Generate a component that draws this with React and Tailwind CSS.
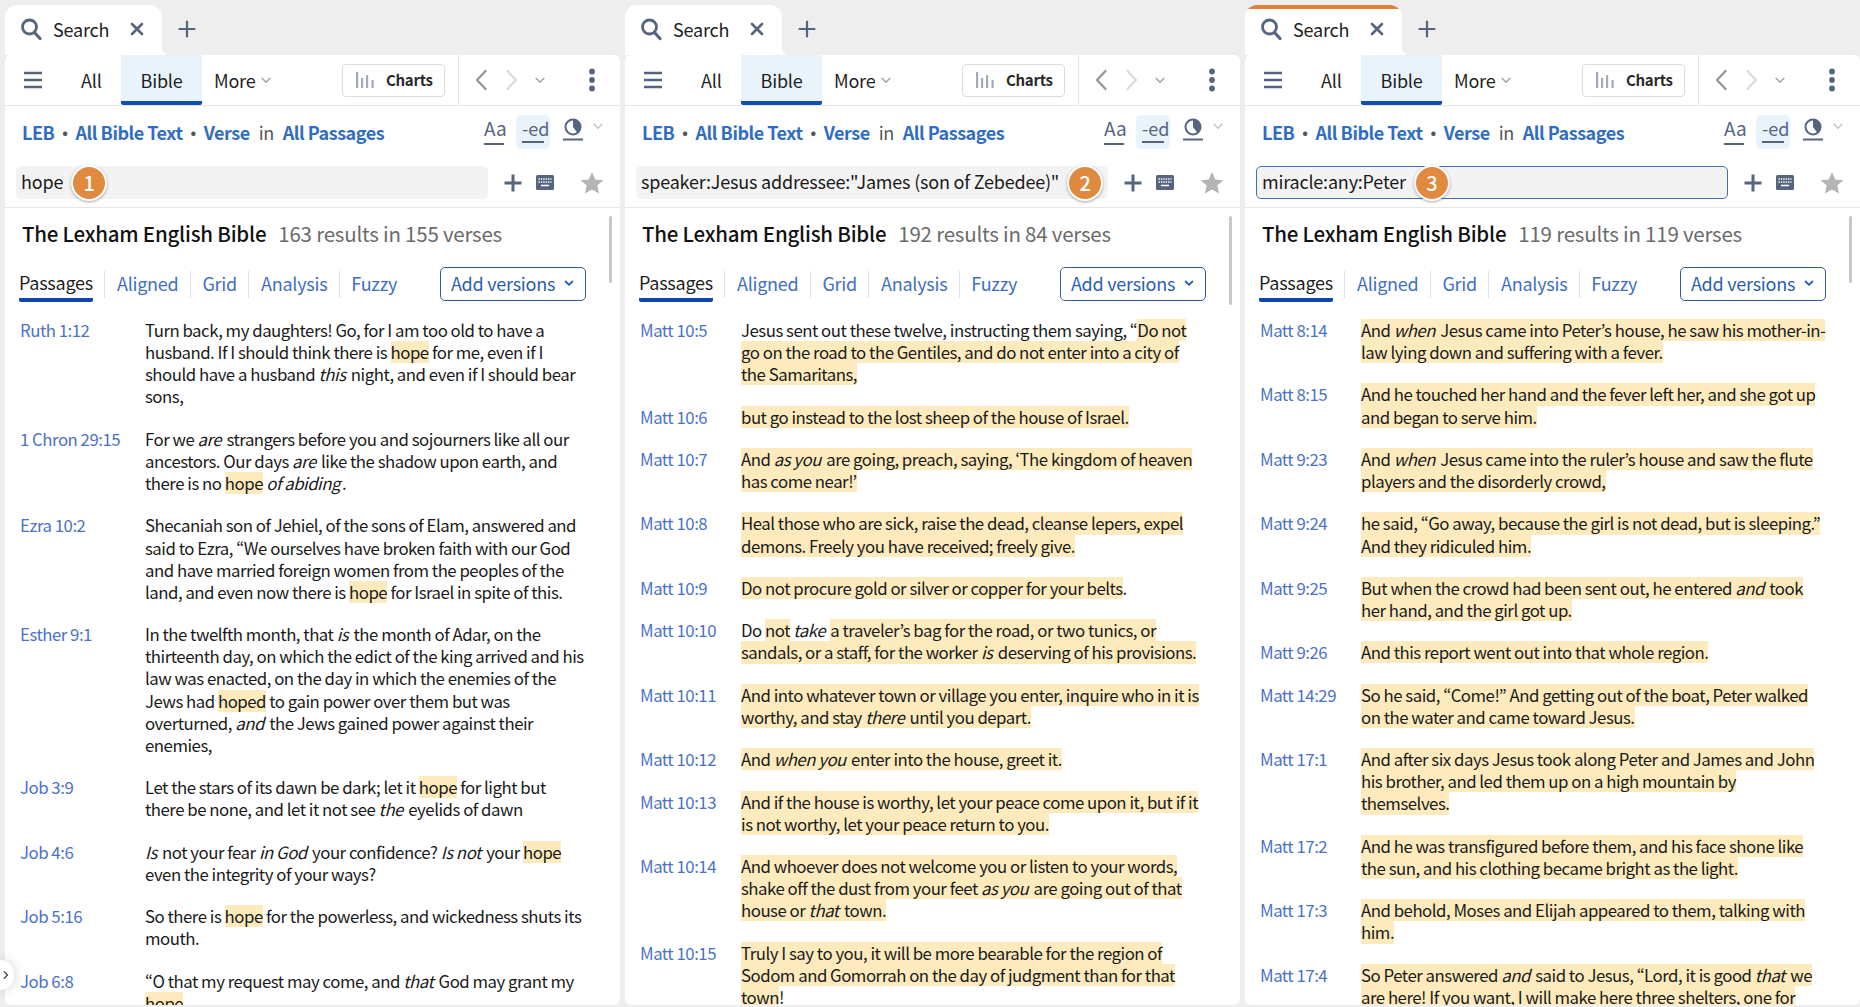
import React from "react";

const slate = "#55657f";

const panel1 = [
  ["Ruth 1:12", ["Turn back, my daughters! Go, for I am too old to have a", "husband. If I should think there is {hope} for me, even if I", "should have a husband _this_ night, and even if I should bear", "sons,"]],
  ["1 Chron 29:15", ["For we _are_ strangers before you and sojourners like all our", "ancestors. Our days _are_ like the shadow upon earth, and", "there is no {hope} _of abiding_."]],
  ["Ezra 10:2", ["Shecaniah son of Jehiel, of the sons of Elam, answered and", "said to Ezra, “We ourselves have broken faith with our God", "and have married foreign women from the peoples of the", "land, and even now there is {hope} for Israel in spite of this."]],
  ["Esther 9:1", ["In the twelfth month, that _is_ the month of Adar, on the", "thirteenth day, on which the edict of the king arrived and his", "law was enacted, on the day in which the enemies of the", "Jews had {hoped} to gain power over them but was", "overturned, _and_ the Jews gained power against their", "enemies,"]],
  ["Job 3:9", ["Let the stars of its dawn be dark; let it {hope} for light but", "there be none, and let it not see _the_ eyelids of dawn"]],
  ["Job 4:6", ["_Is_ not your fear _in God_ your confidence? _Is not_ your {hope}", "even the integrity of your ways?"]],
  ["Job 5:16", ["So there is {hope} for the powerless, and wickedness shuts its", "mouth."]],
  ["Job 6:8", ["“O that my request may come, and _that_ God may grant my", "{hope}"]],
];

const panel2 = [
  ["Matt 10:5", ["Jesus sent out these twelve, instructing them saying, “{Do not}", "{go on the road to the Gentiles, and do not enter into a city of}", "{the Samaritans,}"]],
  ["Matt 10:6", ["{but go instead to the lost sheep of the house of Israel.}"]],
  ["Matt 10:7", ["{And _as you_ are going, preach, saying, ‘The kingdom of heaven}", "{has come near!’}"]],
  ["Matt 10:8", ["{Heal those who are sick, raise the dead, cleanse lepers, expel}", "{demons. Freely you have received; freely give.}"]],
  ["Matt 10:9", ["{Do not procure gold or silver or copper for your belts}."]],
  ["Matt 10:10", ["Do {not} _take_ {a traveler’s bag for the road, or two tunics, or}", "{sandals, or a staff, for the worker _is_ deserving of his provisions.}"]],
  ["Matt 10:11", ["{And into whatever town or village you enter, inquire who in it is}", "{worthy, and stay _there_ until you depart.}"]],
  ["Matt 10:12", ["{And _when you_ enter into the house, greet it.}"]],
  ["Matt 10:13", ["{And if the house is worthy, let your peace come upon it, but if it}", "{is not worthy, let your peace return to you.}"]],
  ["Matt 10:14", ["{And whoever does not welcome you or listen to your words,}", "{shake off the dust from your feet _as you_ are going out of that}", "{house or _that_ town.}"]],
  ["Matt 10:15", ["{Truly I say to you, it will be more bearable for the region of}", "{Sodom and Gomorrah on the day of judgment than for that}", "{town}!"]],
];

const panel3 = [
  ["Matt 8:14", ["{And _when_ Jesus came into Peter’s house, he saw his mother-in-}", "{law lying down and suffering with a fever.}"]],
  ["Matt 8:15", ["{And he touched her hand and the fever left her, and she got up}", "{and began to serve him.}"]],
  ["Matt 9:23", ["{And _when_ Jesus came into the ruler’s house and saw the flute}", "{players and the disorderly crowd,}"]],
  ["Matt 9:24", ["{he said, “Go away, because the girl is not dead, but is sleeping.”}", "{And they ridiculed him.}"]],
  ["Matt 9:25", ["{But when the crowd had been sent out, he entered _and_ took}", "{her hand, and the girl got up.}"]],
  ["Matt 9:26", ["{And this report went out into that whole region.}"]],
  ["Matt 14:29", ["{So he said, “Come!” And getting out of the boat, Peter walked}", "{on the water and came toward Jesus.}"]],
  ["Matt 17:1", ["{And after six days Jesus took along Peter and James and John}", "{his brother, and led them up on a high mountain by}", "{themselves.}"]],
  ["Matt 17:2", ["{And he was transfigured before them, and his face shone like}", "{the sun, and his clothing became bright as the light.}"]],
  ["Matt 17:3", ["{And behold, Moses and Elijah appeared to them, talking with}", "{him.}"]],
  ["Matt 17:4", ["{So Peter answered _and_ said to Jesus, “Lord, it is good _that_ we}", "{are here! If you want, I will make here three shelters, one for}"]],
];

function Italics({ text }) {
  return text.split(/(_[^_]*_)/).map((part, i) =>
    part.startsWith("_") ? <em key={i} className="pr-[2px]">{part.slice(1, -1)}</em> : <span key={i}>{part}</span>
  );
}

function Line({ text }) {
  return (
    <div className="whitespace-pre h-[22.15px]">
      {text.split(/(\{[^}]*\})/).map((part, i) =>
        part.startsWith("{") ? (
          <span key={i} className="inline-block bg-[#fdebbd] h-[22.15px]">
            <Italics text={part.slice(1, -1)} />
          </span>
        ) : (
          <Italics key={i} text={part} />
        )
      )}
    </div>
  );
}

function Chevron({ d, color, width = 2, size = 16 }) {
  return (
    <svg width={size} height={size} viewBox="0 0 16 16" fill="none" className="shrink-0">
      <path d={d} stroke={color} strokeWidth={width} strokeLinecap="round" strokeLinejoin="round" />
    </svg>
  );
}

const down = "M3.5 6l4.5 4.5L12.5 6";

function TabBar({ accent }) {
  return (
    <div className="h-[55px] shrink-0 pt-[5px] flex items-end relative">
      <div className="w-[157px] h-[50px] bg-white rounded-t-[12px] flex items-center relative overflow-hidden">
        {accent && <div className="absolute top-0 left-[3px] right-[3px] h-[4px] bg-[#e3803a] rounded-t-[6px]"></div>}
        <svg width="22" height="24" viewBox="0 0 22 24" fill="none" className="ml-[15px] -mt-[2px]">
          <circle cx="9.5" cy="10" r="7" stroke={slate} strokeWidth="2.8" />
          <path d="M14.5 15.5l5.5 6" stroke={slate} strokeWidth="3.2" strokeLinecap="round" />
        </svg>
        <span className="ml-[11px] text-[18px] leading-none text-[#222] -mt-[3px] tracking-[-0.2px]">Search</span>
        <svg width="14" height="14" viewBox="0 0 14 14" fill="none" className="ml-[21px] -mt-[2px]">
          <path d="M2 2l10 10M12 2L2 12" stroke={slate} strokeWidth="2.6" strokeLinecap="round" />
        </svg>
      </div>
      <div className="absolute left-[157px] top-[47px] w-[8px] h-[8px] bg-[radial-gradient(circle_at_100%_0,transparent_8px,white_8.5px)]"></div>
      <svg width="18" height="18" viewBox="0 0 18 18" fill="none" className="ml-[16px] mb-[17px]">
        <path d="M9 1.5v15M1.5 9h15" stroke={slate} strokeWidth="2.2" strokeLinecap="round" />
      </svg>
    </div>
  );
}

function Toolbar() {
  return (
    <div className="h-[51px] shrink-0 flex items-center border-b border-[#e6e6e6]">
      <svg width="20" height="18" viewBox="0 0 20 18" fill="none" className="ml-[18px]">
        <path d="M1 2h18M1 9h18M1 16h18" stroke={slate} strokeWidth="2.4" />
      </svg>
      <span className="w-[21px] ml-[38px] text-[18px] text-[#1f1f1f] tracking-[-0.2px]">All</span>
      <div className="ml-[19px] w-[81px] self-stretch bg-[#e8f3fc] border-b-[4px] border-[#0e4fb0] rounded-b-[2px] flex items-center justify-center pt-[4px] text-[18px] text-[#1f1f1f] tracking-[-0.2px]">
        Bible
      </div>
      <div className="w-[140px] pl-[12px] flex items-center gap-[4px] text-[18px] text-[#1f1f1f] tracking-[-0.2px]">
        More
        <Chevron d={down} color="#9aa0aa" width={1.5} size={14} />
      </div>
      <div className="w-[103px] h-[33px] border border-[#dcdcdc] rounded-[4px] flex items-center pl-[13px] gap-[11px]">
        <svg width="19" height="18" viewBox="0 0 19 18" fill="#a3abb8">
          <rect x="0" y="1" width="2.2" height="16" />
          <rect x="5" y="7" width="2.2" height="10" />
          <rect x="10" y="4" width="2.2" height="13" />
          <rect x="15.5" y="9" width="2.2" height="8" />
        </svg>
        <span className="text-[15px] font-semibold text-[#2a2a2a] tracking-[-0.3px]">Charts</span>
      </div>
      <div className="ml-[13px] w-px self-stretch bg-[#e6e6e6]"></div>
      <svg width="14" height="22" viewBox="0 0 14 22" fill="none" className="ml-[15px]">
        <path d="M11.5 2L3 11l8.5 9" stroke="#8f949c" strokeWidth="2.2" strokeLinecap="round" strokeLinejoin="round" />
      </svg>
      <svg width="14" height="22" viewBox="0 0 14 22" fill="none" className="ml-[17px]">
        <path d="M2.5 2L11 11l-8.5 9" stroke="#dadada" strokeWidth="2.2" strokeLinecap="round" strokeLinejoin="round" />
      </svg>
      <div className="ml-[14px]">
        <Chevron d={down} color="#a0a4ab" width={1.7} size={14} />
      </div>
      <svg width="8" height="24" viewBox="0 0 8 24" className="ml-[41px]" fill={slate}>
        <circle cx="4" cy="3.5" r="2.9" />
        <circle cx="4" cy="12" r="2.9" />
        <circle cx="4" cy="20.5" r="2.9" />
      </svg>
    </div>
  );
}

function FilterRow({ query, badge, focused }) {
  return (
    <div className="h-[102px] shrink-0 border-b border-[#e6e6e6]">
      <div className="h-[54px] flex items-center pl-[17px] text-[18px] font-semibold text-[#2f6dc4] relative tracking-[-0.47px]">
        <span className="-mt-[2px]">LEB</span>
        <span className="mx-[8px] text-[#555] text-[15px] -mt-[2px]">•</span>
        <span className="-mt-[2px]">All Bible Text</span>
        <span className="mx-[8px] text-[#555] text-[15px] -mt-[2px]">•</span>
        <span className="-mt-[2px]">Verse</span>
        <span className="mx-[9px] font-normal text-[#555] -mt-[2px]">in</span>
        <span className="-mt-[2px]">All Passages</span>
        <div className="absolute left-[479px] top-[9px] w-[20px] text-center text-[#56657e] text-[19px] tracking-normal font-normal leading-[28px] h-[31px] border-b-[2px] border-[#56657e] -mt-px whitespace-nowrap">Aa</div>
        <div className="absolute left-[511px] top-[9px] w-[34px] h-[34px] bg-[#e8f3fc] rounded-[5px] flex justify-center">
          <div className="w-[22px] text-center text-[#56657e] text-[18px] tracking-normal font-normal leading-[24px] h-[27px] border-b-[2px] border-[#56657e] mt-[1px] whitespace-nowrap">-ed</div>
        </div>
        <svg width="20" height="24" viewBox="0 0 20 24" fill="none" className="absolute left-[558px] top-[11px]">
          <circle cx="10" cy="10" r="7.5" stroke={slate} strokeWidth="2" />
          <path d="M10 10V2.5A7.5 7.5 0 0 1 17.5 10a7.5 7.5 0 0 1-3 6z" fill={slate} />
          <path d="M0 22.5h20" stroke={slate} strokeWidth="2" />
        </svg>
        <div className="absolute left-[586px] top-[13px]">
          <Chevron d={down} color="#c2c6cc" width={1.8} size={14} />
        </div>
      </div>
      <div className="h-[33px] mt-[6px] flex items-center">
        <div className={"ml-[11px] w-[472px] shrink-0 h-[33px] bg-[#f3f3f3] rounded-[5px] flex items-center pl-[5px] text-[18px] tracking-[-0.2px] text-[#1a1a1a] " + (focused ? "border border-[#3e72b8]" : "")}>
          <span className="whitespace-pre -mt-[2px]">{query}</span>
          <div className="ml-[8px] w-[36px] h-[36px] shrink-0 rounded-full bg-[#df8a3f] border-[2px] border-white shadow-[0_1px_3px_rgba(0,0,0,0.35)] flex items-center justify-center text-white text-[20px] font-medium leading-none">
            {badge}
          </div>
        </div>
        <svg width="18" height="18" viewBox="0 0 18 18" fill="none" className="ml-[16px]">
          <path d="M9 .5v17M.5 9h17" stroke={slate} strokeWidth="3" />
        </svg>
        <svg width="18" height="15" viewBox="0 0 18 15" className="ml-[14px]">
          <rect width="18" height="15" rx="1.5" fill={slate} />
          <path d="M2.5 4h13M2.5 7h13" stroke="#fff" strokeWidth="1.3" strokeDasharray="1.4 1" />
          <path d="M5 10.5h8" stroke="#fff" strokeWidth="1.5" />
        </svg>
        <svg width="24" height="24" viewBox="0 0 24 24" className="ml-[26px]" fill="#b4b4b4">
          <path d="M12 1l3.3 7.4 8 .8-6 5.4 1.8 8L12 18.5l-7.1 4.1 1.8-8-6-5.4 8-.8z" />
        </svg>
      </div>
    </div>
  );
}

function SubTabs() {
  return (
    <div className="h-[44px] shrink-0 flex items-center pl-[14px] text-[18px] tracking-[-0.25px] text-[#3f6fc0]">
      <span className="h-[34px] leading-[28px] border-b-[4px] border-[#0e47a8] rounded-b-[2px] text-[#1f1f1f] mr-[11.5px] mt-[2px]">Passages</span>
      {["Aligned", "Grid", "Analysis", "Fuzzy"].map((t) => (
        <span key={t} className="h-[27px] leading-[25px] border-l border-[#e0e0e0] pl-[11.5px] mr-[11.5px]">{t}</span>
      ))}
      <div className="ml-auto mr-[34px] w-[146px] h-[34px] pb-[2px] border border-[#2f5d9e] rounded-[5px] flex items-center justify-center gap-[8px] text-[#2b5fb0]">
        Add versions
        <Chevron d={down} color="#2b5fb0" width={2.4} size={12} />
      </div>
    </div>
  );
}

function Panel({ query, badge, focused, accent, count, verses, refCol, thumb }) {
  return (
    <div className="flex-1 min-w-0 flex flex-col">
      <TabBar accent={accent} />
      <div className="flex-1 min-h-0 bg-white rounded-t-[6px] rounded-b-[6px] overflow-hidden relative">
        <Toolbar />
        <FilterRow query={query} badge={badge} focused={focused} />
        <div className="h-[54px] pb-[4px] flex items-center pl-[17px] gap-[12px] text-[20.5px] whitespace-nowrap tracking-[-0.22px]">
          <span className="font-medium text-[#111]">The Lexham English Bible</span>
          <span className="text-[#6b6b6b]">{count}</span>
        </div>
        <SubTabs />
        <div className="pt-[13px] pl-[15px] flex flex-col gap-[20.2px] text-[16.8px] tracking-[-0.48px] leading-[22.15px] text-[#1a1a1a]">
          {verses.map(([ref, lines]) => (
            <div key={ref} className="flex">
              <div className={"shrink-0 text-[#4a72c8] " + refCol}>{ref}</div>
              <div>
                {lines.map((l, i) => (
                  <Line key={i} text={l} />
                ))}
              </div>
            </div>
          ))}
        </div>
        <div className={"absolute right-[8px] top-[161px] w-[3px] bg-[#c8c8c8] rounded-full " + thumb}></div>
      </div>
    </div>
  );
}

export default function App() {
  return (
    <div className="relative h-[1007px] w-full overflow-hidden flex gap-[5px] pl-[5px] pb-[2px] bg-[#eeeeee] font-['Noto_Sans_CJK_KR',sans-serif]">
      <Panel query="hope" badge="1" count="163 results in 155 verses" verses={panel1} refCol="w-[125px]" thumb="h-[67px]" />
      <Panel query={'speaker:Jesus addressee:"James (son of Zebedee)"'} badge="2" count="192 results in 84 verses" verses={panel2} refCol="w-[101px]" thumb="h-[89px]" />
      <Panel query="miracle:any:Peter" badge="3" focused accent count="119 results in 119 verses" verses={panel3} refCol="w-[101px]" thumb="h-[67px]" />
      <div className="absolute left-0 top-[960px] w-[14px] h-[30px] bg-white rounded-r-full shadow-[0_0_12px_rgba(0,0,0,0.18)] flex items-center">
        <Chevron d="M5.5 3.5L10 8l-4.5 4.5" color="#444" width={1.8} size={12} />
      </div>
    </div>
  );
}
